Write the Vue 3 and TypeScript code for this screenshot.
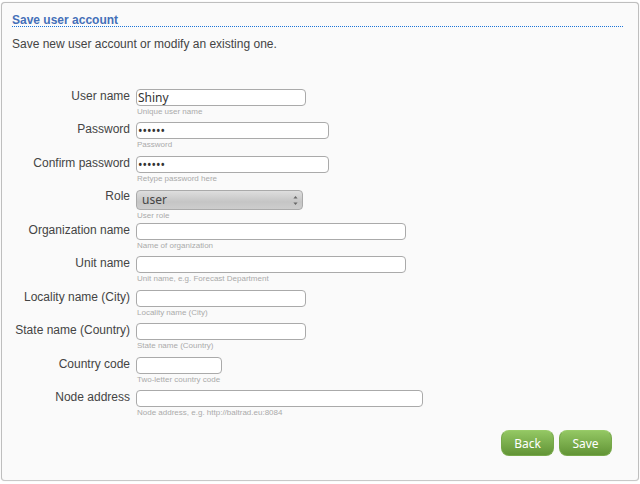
<script setup lang="ts">
import { reactive } from 'vue'

type Width = 'tiny' | 'small' | 'medium' | 'large' | 'full'

interface Field {
  id: string
  label: string
  hint: string
  type: 'text' | 'password' | 'select'
  width: Width
}

const fields: Field[] = [
  { id: 'username', label: 'User name', hint: 'Unique user name', type: 'text', width: 'small' },
  { id: 'password', label: 'Password', hint: 'Password', type: 'password', width: 'medium' },
  { id: 'confirm', label: 'Confirm password', hint: 'Retype password here', type: 'password', width: 'medium' },
  { id: 'role', label: 'Role', hint: 'User role', type: 'select', width: 'small' },
  { id: 'organization', label: 'Organization name', hint: 'Name of organization', type: 'text', width: 'large' },
  { id: 'unit', label: 'Unit name', hint: 'Unit name, e.g. Forecast Department', type: 'text', width: 'large' },
  { id: 'locality', label: 'Locality name (City)', hint: 'Locality name (City)', type: 'text', width: 'small' },
  { id: 'state', label: 'State name (Country)', hint: 'State name (Country)', type: 'text', width: 'small' },
  { id: 'country', label: 'Country code', hint: 'Two-letter country code', type: 'text', width: 'tiny' },
  { id: 'node', label: 'Node address', hint: 'Node address, e.g. http://baltrad.eu:8084', type: 'text', width: 'full' },
]

const values = reactive<Record<string, string>>({
  username: 'Shiny',
  password: 'secret',
  confirm: 'secret',
  role: 'user',
  organization: '',
  unit: '',
  locality: '',
  state: '',
  country: '',
  node: '',
})
</script>

<template>
  <main class="panel">
    <h1>Save user account</h1>
    <p class="intro">Save new user account or modify an existing one.</p>
    <form @submit.prevent>
      <div class="fields">
        <div v-for="f in fields" :key="f.id" class="row">
          <label :for="f.id">{{ f.label }}</label>
          <div class="control">
            <div v-if="f.type === 'select'" class="select">
              <select :id="f.id" v-model="values[f.id]">
                <option value="user">user</option>
              </select>
              <svg class="arrows" viewBox="0 0 6 12" aria-hidden="true">
                <path d="M0.5 3.5 L3 0.5 L5.5 3.5 Z M0.5 8.5 L3 11.5 L5.5 8.5 Z" />
              </svg>
            </div>
            <input v-else :id="f.id" v-model="values[f.id]" :type="f.type" :class="f.width" autocomplete="off" />
            <small>{{ f.hint }}</small>
          </div>
        </div>
      </div>
      <div class="actions">
        <button type="button">Back</button>
        <button type="submit">Save</button>
      </div>
    </form>
  </main>
</template>

<style>
body {
  background: #fff;
}
</style>

<style scoped>
.panel {
  margin: 2px 1px;
  padding: 11px 15px 24px 10px;
  border: 1px solid #bebebe;
  border-bottom-color: #c8c8c8;
  border-radius: 4px;
  background: #fafafa;
  box-shadow: 0 0 1px #ccc;
  color: #444;
  font: 12px/14px "Liberation Sans", Arial, sans-serif;
}

h1 {
  margin: 0;
  border-bottom: 1px dotted #1c74d8;
  color: #446fb8;
  font-size: 12px;
  line-height: 12px;
}

.intro {
  margin: 10px 0 38px;
}

.fields {
  display: grid;
  grid-auto-rows: 33px 34px;
}

.row {
  display: grid;
  grid-template-columns: 118px 1fr;
  column-gap: 6px;
}

label {
  text-align: right;
}

.control {
  display: flex;
  flex-direction: column;
  align-items: flex-start;
}

input {
  box-sizing: border-box;
  height: 17px;
  padding: 0 1px;
  border: 1px solid #aaa;
  border-radius: 4px;
  background: #fff;
  color: #333;
  font: 12px/15px "Noto Sans", sans-serif;
}

.tiny {
  width: 86px;
}

.small {
  width: 170px;
}

.medium {
  width: 193px;
}

.large {
  width: 270px;
}

.full {
  width: 287px;
}

small {
  padding: 2px 1px 0;
  color: #aaa;
  font-size: 8px;
  line-height: 8px;
}

.select {
  position: relative;
  margin-top: 1px;
}

select {
  display: block;
  box-sizing: border-box;
  width: 167px;
  height: 20px;
  padding: 0 5px;
  border: 1px solid #aaa;
  border-radius: 4px;
  appearance: none;
  background: linear-gradient(#dedede, #c5c5c5 60%, #cdcdcd);
  color: #444;
  font: 12px/18px "Noto Sans", sans-serif;
}

.arrows {
  position: absolute;
  top: 5px;
  right: 5px;
  width: 5px;
  height: 11px;
  fill: #666;
  pointer-events: none;
}

.actions {
  display: flex;
  justify-content: flex-end;
  gap: 5px;
  margin: 6px 11px 0 0;
}

button {
  width: 53px;
  height: 26px;
  padding: 1px 0 0;
  border: 1px solid #77a84a;
  border-top-color: #98cb68;
  border-radius: 8px;
  background: linear-gradient(#93c763, #629436);
  color: #fff;
  font: 12px/24px "Noto Sans", sans-serif;
}
</style>
